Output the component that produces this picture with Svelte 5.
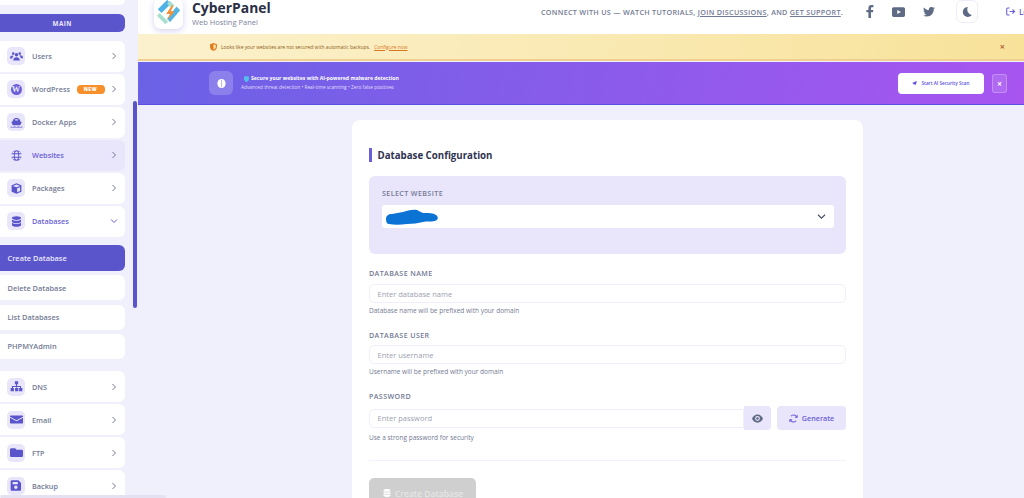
<script>
  const icons = {
    users: 'M5 5.500a2 2 0 1 1 0-4 2 2 0 0 1 0 4zm10 0a2 2 0 1 1 0-4 2 2 0 0 1 0 4zM10 8a2.600 2.600 0 1 1 0-5.200A2.600 2.600 0 0 1 10 8zM0 10.500C0 8 1.500 6.500 3.500 6.500c1 0 1.600.3 2 .8-1.200.9-2 2-2 3.700H0zm20 0h-3.500c0-1.700-.8-2.800-2-3.700.4-.5 1-.8 2-.8 2 0 3.500 1.500 3.500 4zM5 14c0-3.500 2-5 5-5s5 1.500 5 5z',
    docker: 'M7 1h6v2h2l1 3.500 2 .8-2.200 5H4.200L2 7.300l2-.8L5 3h2zM8 3v2h4V3zM1 14c1.500 0 1.500.8 3 .8s1.500-.8 3-.8 1.500.8 3 .8 1.500-.8 3-.8 1.500.8 3 .8 1.500-.8 3-.8v1.800H1z',
    globe: 'M10 0a8 8 0 1 0 0 16 8 8 0 0 0 0-16zM3 4.500h3.200c.1-1 .4-1.900.8-2.700A6.500 6.500 0 0 0 3 4.500zm4.700 0h4.600C12 2.800 11 1.500 10 1.500S8 2.800 7.700 4.500zm6.100 0H17a6.500 6.500 0 0 0-4-2.700c.4.800.7 1.700.8 2.700zM2.300 6a6.500 6.500 0 0 0 0 4H6a18 18 0 0 1 0-4zm5.200 0a13 13 0 0 0 0 4h5a13 13 0 0 0 0-4zm6.500 0a18 18 0 0 1 0 4h3.700a6.500 6.500 0 0 0 0-4zM3 11.500a6.500 6.500 0 0 0 4 2.700c-.4-.8-.7-1.700-.8-2.700zm4.700 0c.3 1.700 1.300 3 2.300 3s2-1.300 2.300-3zm6.100 0c-.1 1-.4 1.900-.8 2.700a6.500 6.500 0 0 0 4-2.700z',
    cube: 'M10 0l7.500 3v10L10 16l-7.500-3V3zM4.500 4L10 6.200 15.500 4 10 1.800zM11 7.800v6l4.500-1.800v-6z',
    db: 'M10 0c4 0 7 1.200 7 2.800S14 5.600 10 5.600 3 4.400 3 2.800 6 0 10 0zM3 4.800c1.500 1.300 4 2 7 2s5.500-.7 7-2v3.200c0 1.500-3 2.800-7 2.800S3 9.500 3 8zm0 5.200c1.500 1.300 4 2 7 2s5.500-.7 7-2v3.200C17 14.800 14 16 10 16s-7-1.200-7-2.800z',
    sitemap: 'M7.500 0h5v4.500h-1.700v2.700H17v3h2v5h-5v-5h1.500V8.700h-4.700v1.500h2v5h-5v-5h2V8.700H4.500v1.500H6v5H1v-5h2v-3h6.200V4.500H7.500z',
    mail: 'M1 2h18c.6 0 1 .4 1 1v.6l-10 5.400L0 3.600V3c0-.6.4-1 1-1zM0 5.400l10 5.400 10-5.400V13c0 .6-.4 1-1 1H1c-.6 0-1-.4-1-1z',
    folder: 'M2 1.500h6l2 2.200h8c1 0 2 .8 2 1.800v7.500c0 1-1 2-2 2H2c-1 0-2-1-2-2V3.500c0-1 1-2 2-2z',
    save: 'M3 0h10l4 4v10c0 1.100-.9 2-2 2H3c-1.100 0-2-.9-2-2V2C1 .9 1.900 0 3 0zm1 2.500v3.500h8V2.500zM9 8a2.700 2.700 0 1 0 0 5.400A2.700 2.700 0 0 0 9 8z'
  };
  const nav1 = [
    { label: 'Users', icon: 'users' },
    { label: 'WordPress', wp: true, badge: 'NEW' },
    { label: 'Docker Apps', icon: 'docker' },
    { label: 'Websites', icon: 'globe', hover: true },
    { label: 'Packages', icon: 'cube' },
    { label: 'Databases', icon: 'db', open: true }
  ];
  const subs = ['Create Database', 'Delete Database', 'List Databases', 'PHPMYAdmin'];
  const nav2 = [
    { label: 'DNS', icon: 'sitemap' },
    { label: 'Email', icon: 'mail' },
    { label: 'FTP', icon: 'folder' },
    { label: 'Backup', icon: 'save' }
  ];
</script>

{#snippet navItem(item)}
  <div class="nav-item" class:hover={item.hover} class:open={item.open}>
    <span class="nav-icon" class:bare={item.hover}>
      {#if item.wp}
        <span class="wp">W</span>
      {:else}
        <svg viewBox="0 0 20 16" width="13" height="11"><path d={icons[item.icon]} fill="#5b55cb" fill-rule="evenodd" /></svg>
      {/if}
    </span>
    <span class="nav-label">{item.label}</span>
    {#if item.badge}<span class="badge">{item.badge}</span>{/if}
    <svg class="chev" viewBox="0 0 8 8" width="8" height="8">
      {#if item.open}
        <path d="M1 2.500l3 3 3-3" />
      {:else}
        <path d="M2.500 1l3 3-3 3" />
      {/if}
    </svg>
  </div>
{/snippet}

<div class="page">
  <aside class="sidebar">
    <div class="stub"></div>
    <div class="section">MAIN</div>
    <div class="group">
      {#each nav1 as item}{@render navItem(item)}{/each}
    </div>
    <div class="subs">
      {#each subs as s, i}
        <div class="sub" class:active={i === 0}>{s}</div>
      {/each}
    </div>
    <div class="group">
      {#each nav2 as item}{@render navItem(item)}{/each}
    </div>
  </aside>
  <div class="vbar"></div>
  <div class="hbar"></div>

  <main class="main">
    <header class="header">
      <div class="logo">
        <svg viewBox="0 0 30 30" width="28" height="28">
          <path d="M13 1l4 4L7 15l-4-4z" fill="#4db3e6" />
          <path d="M23 8l4 4-11 13-3-4z" fill="#56b5e3" />
          <path d="M5 15l9 9-3 3-9-9z" fill="#a8e0cf" />
          <path d="M16 2l5 5-4 2-4-4z" fill="#a8e0cf" />
          <path d="M18 7l-6 9h4l-3 7 8-10h-4l3-6z" fill="#f2913a" />
        </svg>
      </div>
      <div class="brand">
        <div class="brand-name">CyberPanel</div>
        <div class="brand-sub">Web Hosting Panel</div>
      </div>
      <div class="connect">CONNECT WITH US — WATCH TUTORIALS, <u>JOIN DISCUSSIONS</u>, AND <u>GET SUPPORT</u>.</div>
      <div class="socials">
        <svg viewBox="0 0 10 16" width="8" height="13"><path d="M3 16V9H.5V6H3V4c0-2.500 1.500-4 3.800-4H9.300v2.800H7.800C6.600 2.800 6.200 3.400 6.200 4.400V6h3l-.5 3H6.200v7z" fill="#5f6b85" /></svg>
        <svg viewBox="0 0 16 12" width="13" height="10"><path d="M2 0h12c1.100 0 2 .9 2 2v8c0 1.100-.9 2-2 2H2c-1.100 0-2-.9-2-2V2C0 .9.900 0 2 0zm4.500 3.500v5l4.500-2.500z" fill="#5f6b85" fill-rule="evenodd" /></svg>
        <svg viewBox="0 0 24 20" width="12" height="10"><path d="M24 2.400c-.9.400-1.800.7-2.800.8 1-.6 1.800-1.600 2.200-2.700-1 .6-2 1-3.100 1.200A4.900 4.900 0 0 0 11.900 6.200C7.800 6 4.200 4 1.700.9c-1.300 2.200-.6 5.100 1.500 6.500-.8 0-1.500-.2-2.200-.6 0 2.300 1.600 4.400 3.900 4.900-.7.200-1.500.2-2.200.1.600 2 2.400 3.400 4.600 3.400A9.900 9.900 0 0 1 0 16.800 14 14 0 0 0 7.500 19c9.100 0 14.300-7.700 14-14.600 1-.7 1.800-1.500 2.500-2z" fill="#5f6b85" /></svg>
      </div>
      <div class="moon">
        <svg viewBox="0 0 12 12" width="10" height="10"><path d="M7 0a6 6 0 1 0 4.700 9.700A7 7 0 0 1 7 0z" fill="#5f6b85" /></svg>
      </div>
      <div class="logout">
        <svg viewBox="0 0 14 12" width="10" height="9"><path d="M5 1H2.500C1.700 1 1 1.700 1 2.500v7C1 10.300 1.700 11 2.500 11H5M5 6h7M9 3l3 3-3 3" fill="none" stroke="#6a5fd8" stroke-width="1.500" /></svg>
        <span>Logout</span>
      </div>
    </header>

    <div class="notice">
      <svg viewBox="0 0 12 14" width="7" height="8"><path d="M6 0l6 2v4.500C12 10 9.500 12.800 6 14 2.500 12.800 0 10 0 6.500V2z" fill="#e2791b" /><path d="M6 2v10c2.300-1 4-3.300 4-5.500V3.300z" fill="#fbe9b0" /></svg>
      <span class="notice-text">Looks like your websites are not secured with automatic backups.</span>
      <u class="notice-link">Configure now</u>
      <span class="notice-x">×</span>
    </div>

    <div class="promo">
      <div class="promo-icon">
        <svg viewBox="0 0 12 12" width="9" height="9"><path d="M6 0c3.300 0 5.500 2.500 5.500 6S9.300 12 6 12 .5 9.500.5 6 2.700 0 6 0z" fill="#fff" /><path d="M6 1v10" stroke="#8a7be8" stroke-width=".7" /></svg>
      </div>
      <div class="promo-copy">
        <div class="promo-title">
          <svg viewBox="0 0 10 12" width="5" height="6"><path d="M5 0l5 1.700v3.800C10 8.500 8 11 5 12 2 11 0 8.500 0 5.500V1.700z" fill="#52c0ea" /></svg>
          <span>Secure your websites with AI-powered malware detection</span>
        </div>
        <div class="promo-sub">Advanced threat detection • Real-time scanning • Zero false positives</div>
      </div>
      <div class="promo-btn">
        <svg viewBox="0 0 12 12" width="5" height="5"><path d="M12 0L8.500 10 6.500 7.500 4 9V6.500L0 4.500z" fill="#5b4fe0" /></svg>
        <span>Start AI Security Scan</span>
      </div>
      <div class="promo-x">×</div>
    </div>

    <section class="card">
      <h2 class="title">Database Configuration</h2>
      <div class="panel">
        <div class="label">SELECT WEBSITE</div>
        <div class="select">
          <svg class="blob" viewBox="0 0 54 16" width="54" height="16"><path d="M1 10c0-3 2-5 6-5 4-1 7-1 11-2 4-1 9-3 14-2 3 1 4 3 8 3 4 0 8 0 11 2 3 2 2 5-1 6-5 1-8 0-12 1-5 1-10 2-16 2-7 1-13 1-18 0C2 15 1 13 1 10z" fill="#0a73d4" /></svg>
          <svg class="select-chev" viewBox="0 0 10 8" width="9" height="7"><path d="M1 2l4 4 4-4" fill="none" stroke="#4a4f66" stroke-width="1.300" /></svg>
        </div>
      </div>

      <div class="label first">DATABASE NAME</div>
      <div class="input top6">Enter database name</div>
      <div class="hint">Database name will be prefixed with your domain</div>

      <div class="label next">DATABASE USER</div>
      <div class="input">Enter username</div>
      <div class="hint">Username will be prefixed with your domain</div>

      <div class="label next">PASSWORD</div>
      <div class="pw-row">
        <div class="input pw">Enter password</div>
        <div class="eye">
          <svg viewBox="0 0 16 12" width="11" height="9"><path d="M8 0c3.600 0 6.500 2.500 8 6-1.500 3.500-4.400 6-8 6S1.500 9.500 0 6c1.500-3.500 4.400-6 8-6zm0 2.500a3.500 3.500 0 1 0 0 7 3.500 3.500 0 0 0 0-7z" fill="#5f6b85" fill-rule="evenodd" /><circle cx="8" cy="6" r="1.800" fill="#5f6b85" /></svg>
        </div>
        <div class="gen">
          <svg viewBox="0 0 14 14" width="9" height="9"><path d="M12 5A5.200 5.200 0 0 0 3 3.500M2 9a5.200 5.200 0 0 0 9 1.500" fill="none" stroke="#6a5fd8" stroke-width="1.800" /><path d="M13.500 1v5h-5zM.5 13V8h5z" fill="#6a5fd8" /></svg>
          <span>Generate</span>
        </div>
      </div>
      <div class="hint">Use a strong password for security</div>

      <hr class="rule" />

      <div class="submit">
        <svg viewBox="0 0 20 16" width="10" height="10"><path d={icons.db} fill="#fff" fill-rule="evenodd" /></svg>
        <span>Create Database</span>
      </div>
    </section>
  </main>
</div>

<style>
  :global(body) {
    margin: 0;
    background: #f0effc;
    font-family: "Open Sans", "Liberation Sans", sans-serif;
  }
  .page {
    position: relative;
    display: flex;
    width: 1024px;
    height: 498px;
    overflow: hidden;
    background: #f0effc;
  }
  .sidebar {
    flex: none;
    width: 138px;
    box-sizing: border-box;
    padding-right: 13.500px;
    display: flex;
    flex-direction: column;
    align-items: stretch;
  }
  .sidebar > * {
    flex: none;
  }
  .stub {
    height: 5px;
    background: #fff;
    border-radius: 0 0 6px 0;
  }
  .section {
    margin-top: 9px;
    height: 18px;
    background: #5b55cb;
    border-radius: 0 6px 6px 0;
    color: #ece9fb;
    font-size: 6.300px;
    font-weight: 700;
    letter-spacing: .5px;
    display: flex;
    align-items: center;
    justify-content: center;
  }
  .group {
    margin-top: 8.500px;
    display: flex;
    flex-direction: column;
    gap: 1.500px;
  }
  .nav-item {
    flex: none;
    height: 31.500px;
    background: #fff;
    border-radius: 0 6px 6px 0;
    display: flex;
    align-items: center;
    padding-left: 7px;
    padding-right: 7px;
    color: #737a94;
    font-size: 7.300px;
    font-weight: 600;
  }
  .nav-item.hover {
    background: #e9e5fb;
    color: #6a5fd8;
  }
  .nav-item.open {
    color: #6a5fd8;
  }
  .nav-icon {
    flex: none;
    width: 18px;
    height: 18px;
    border-radius: 5px;
    background: #e9e5fb;
    display: flex;
    align-items: center;
    justify-content: center;
    margin-right: 7px;
  }
  .nav-icon.bare {
    background: transparent;
  }
  .wp {
    width: 11px;
    height: 11px;
    border-radius: 50%;
    background: #6a5fd8;
    color: #e9e5fb;
    font-family: "Liberation Serif", serif;
    font-size: 8.500px;
    font-weight: 700;
    line-height: 11px;
    text-align: center;
  }
  .nav-label {
    flex: 1;
    white-space: nowrap;
  }
  .badge {
    background: #f7902b;
    color: #fff;
    font-size: 5px;
    font-weight: 800;
    letter-spacing: .5px;
    height: 9px;
    width: 28px;
    border-radius: 4px;
    display: flex;
    align-items: center;
    justify-content: center;
    margin-right: 5px;
  }
  .chev {
    flex: none;
    fill: none;
    stroke: #737a94;
    stroke-width: 1;
  }
  .open .chev {
    stroke: #6a5fd8;
  }
  .subs {
    margin-top: 8px;
    display: flex;
    flex-direction: column;
    gap: 4.300px;
  }
  .sub {
    flex: none;
    height: 25px;
    background: #fff;
    border-radius: 0 6px 6px 0;
    padding-left: 7.500px;
    display: flex;
    align-items: center;
    color: #737a94;
    font-size: 7.400px;
    font-weight: 600;
  }
  .sub.active {
    height: 26px;
    background: #5b55cb;
    color: #ece9fb;
  }
  .subs + .group {
    margin-top: 12px;
  }
  .vbar {
    position: absolute;
    left: 133px;
    top: 101px;
    width: 4px;
    height: 207px;
    background: #5b55cb;
    border-radius: 2px;
  }
  .hbar {
    position: absolute;
    left: 0;
    bottom: 0;
    width: 166px;
    height: 3px;
    background: #e4e1f2;
    border-radius: 2px;
  }
  .main {
    flex: 1;
    min-width: 0;
    display: flex;
    flex-direction: column;
  }
  .header {
    flex: none;
    height: 34px;
    background: #fff;
    display: flex;
    align-items: center;
    position: relative;
    overflow: hidden;
    padding-left: 16px;
  }
  .logo {
    flex: none;
    width: 29px;
    height: 31px;
    margin-top: -8px;
    background: #fff;
    border-radius: 7px;
    box-shadow: 0 2px 6px rgba(91, 85, 203, .25);
    display: flex;
    align-items: center;
    justify-content: center;
  }
  .brand {
    flex: none;
    margin-left: 9px;
    margin-top: -6px;
    width: 120px;
  }
  .brand-name {
    font-size: 13.900px;
    font-weight: 700;
    line-height: 14px;
    color: #2a2f45;
  }
  .brand-sub {
    font-size: 7.500px;
    line-height: 10px;
    color: #7d849c;
    margin-top: 2px;
  }
  .connect {
    margin-left: 229px;
    margin-top: -11px;
    width: 302px;
    flex: none;
    font-size: 7.200px;
    font-weight: 600;
    letter-spacing: .3px;
    color: #737a94;
    white-space: nowrap;
  }
  .connect u {
    text-underline-offset: 1px;
  }
  .socials {
    flex: none;
    margin-left: 23px;
    margin-top: -11px;
    width: 69px;
    display: flex;
    align-items: center;
    justify-content: space-between;
  }
  .moon {
    flex: none;
    margin-left: 21px;
    margin-top: -11px;
    width: 20px;
    height: 21px;
    border: 1px solid #eeecfb;
    border-radius: 6px;
    display: flex;
    align-items: center;
    justify-content: center;
  }
  .logout {
    flex: none;
    margin-left: 28px;
    margin-top: -11px;
    display: flex;
    align-items: center;
    gap: 3px;
    font-size: 8px;
    font-weight: 600;
    color: #6a5fd8;
  }
  .notice {
    flex: none;
    height: 27px;
    box-sizing: border-box;
    padding-left: 72px;
    padding-right: 19px;
    border-bottom: 2px solid #f0cf90;
    margin-bottom: 1px;
    background: linear-gradient(100deg, #fbf1cd, #f8e29a);
    display: flex;
    align-items: center;
    gap: 4px;
    font-size: 4.900px;
    color: #8c5a22;
  }
  .notice-link {
    color: #d9771f;
    margin-left: 0;
  }
  .notice-x {
    margin-left: auto;
    font-size: 9px;
    font-weight: 700;
    color: #b5653a;
  }
  .promo {
    flex: none;
    height: 43px;
    box-sizing: border-box;
    padding-left: 71px;
    padding-right: 17px;
    border-bottom: 1px solid #5b4fe0;
    background: linear-gradient(100deg, #6a62e6, #a855f0);
    display: flex;
    align-items: center;
    color: #fff;
  }
  .promo-icon {
    flex: none;
    width: 24px;
    height: 24px;
    border-radius: 6px;
    background: rgba(255, 255, 255, .2);
    display: flex;
    align-items: center;
    justify-content: center;
    margin-right: 8px;
  }
  .promo-copy {
    flex: 1;
  }
  .promo-title {
    display: flex;
    align-items: center;
    gap: 2px;
    padding-left: 3px;
    font-size: 5.150px;
    font-weight: 700;
    line-height: 9px;
  }
  .promo-sub {
    font-size: 4.800px;
    line-height: 9px;
    color: #e4defc;
  }
  .promo-btn {
    flex: none;
    width: 86px;
    height: 21px;
    box-sizing: border-box;
    background: #fff;
    border-radius: 4px;
    display: flex;
    align-items: center;
    justify-content: center;
    gap: 4px;
    font-size: 4.700px;
    font-weight: 600;
    color: #5b4fe0;
  }
  .promo-x {
    flex: none;
    margin-left: 8px;
    width: 15px;
    height: 19px;
    box-sizing: border-box;
    border: 1px solid rgba(255, 255, 255, .25);
    background: rgba(255, 255, 255, .12);
    border-radius: 3px;
    display: flex;
    align-items: center;
    justify-content: center;
    font-size: 8px;
    font-weight: 700;
  }
  .card {
    flex: none;
    margin: 15px 0 0 214px;
    width: 511px;
    box-sizing: border-box;
    padding: 28px 17px 30px;
    background: #fff;
    border-radius: 8px 8px 0 0;
  }
  .title {
    margin: 0;
    height: 14px;
    border-left: 3px solid #6a5fd8;
    padding-left: 5.500px;
    font-size: 9.700px;
    font-weight: 700;
    line-height: 15px;
    color: #2f3450;
  }
  .panel {
    margin-top: 14px;
    height: 78px;
    box-sizing: border-box;
    padding: 12px 12px 0 13px;
    background: #e9e5fb;
    border-radius: 6px;
  }
  .label {
    font-size: 7.100px;
    font-weight: 600;
    line-height: 10px;
    letter-spacing: .4px;
    color: #737a94;
  }
  .select {
    margin-top: 7px;
    height: 23px;
    background: #fff;
    border-radius: 3px;
    display: flex;
    align-items: center;
    justify-content: space-between;
    padding: 0 8px 0 3px;
  }
  .first,
  .next {
    margin-top: 14px;
  }
  .input {
    flex: none;
    margin-top: 5px;
    height: 19px;
    box-sizing: border-box;
    border: 1px solid #f0eefb;
    border-radius: 5px;
    padding-left: 7.500px;
    display: flex;
    align-items: center;
    font-size: 7.500px;
    color: #9c9fb0;
    background: #fff;
  }
  .top6 {
    margin-top: 6px;
  }
  .hint {
    margin-top: 3px;
    font-size: 6.500px;
    line-height: 10px;
    color: #737a94;
  }
  .pw-row {
    display: flex;
    align-items: center;
    margin-top: 5px;
  }
  .pw {
    flex: 1;
    margin-top: 0;
    border-radius: 5px 0 0 5px;
  }
  .eye {
    flex: none;
    width: 27px;
    height: 24px;
    background: #e9e5fb;
    border-radius: 0 4px 4px 0;
    display: flex;
    align-items: center;
    justify-content: center;
  }
  .gen {
    flex: none;
    margin-left: 6px;
    width: 69px;
    height: 24px;
    background: #e9e5fb;
    border-radius: 4px;
    display: flex;
    align-items: center;
    justify-content: center;
    gap: 4px;
    font-size: 7.200px;
    font-weight: 600;
    color: #6a5fd8;
  }
  .rule {
    margin: 17px 0 17px;
    border: 0;
    border-top: 1px solid #f3f1fc;
  }
  .submit {
    width: 107px;
    height: 30px;
    background: #cfcfcf;
    border-radius: 5px;
    display: flex;
    align-items: center;
    justify-content: center;
    gap: 3px;
    font-size: 8.500px;
    font-weight: 600;
    color: #e6e6e6;
  }
</style>
